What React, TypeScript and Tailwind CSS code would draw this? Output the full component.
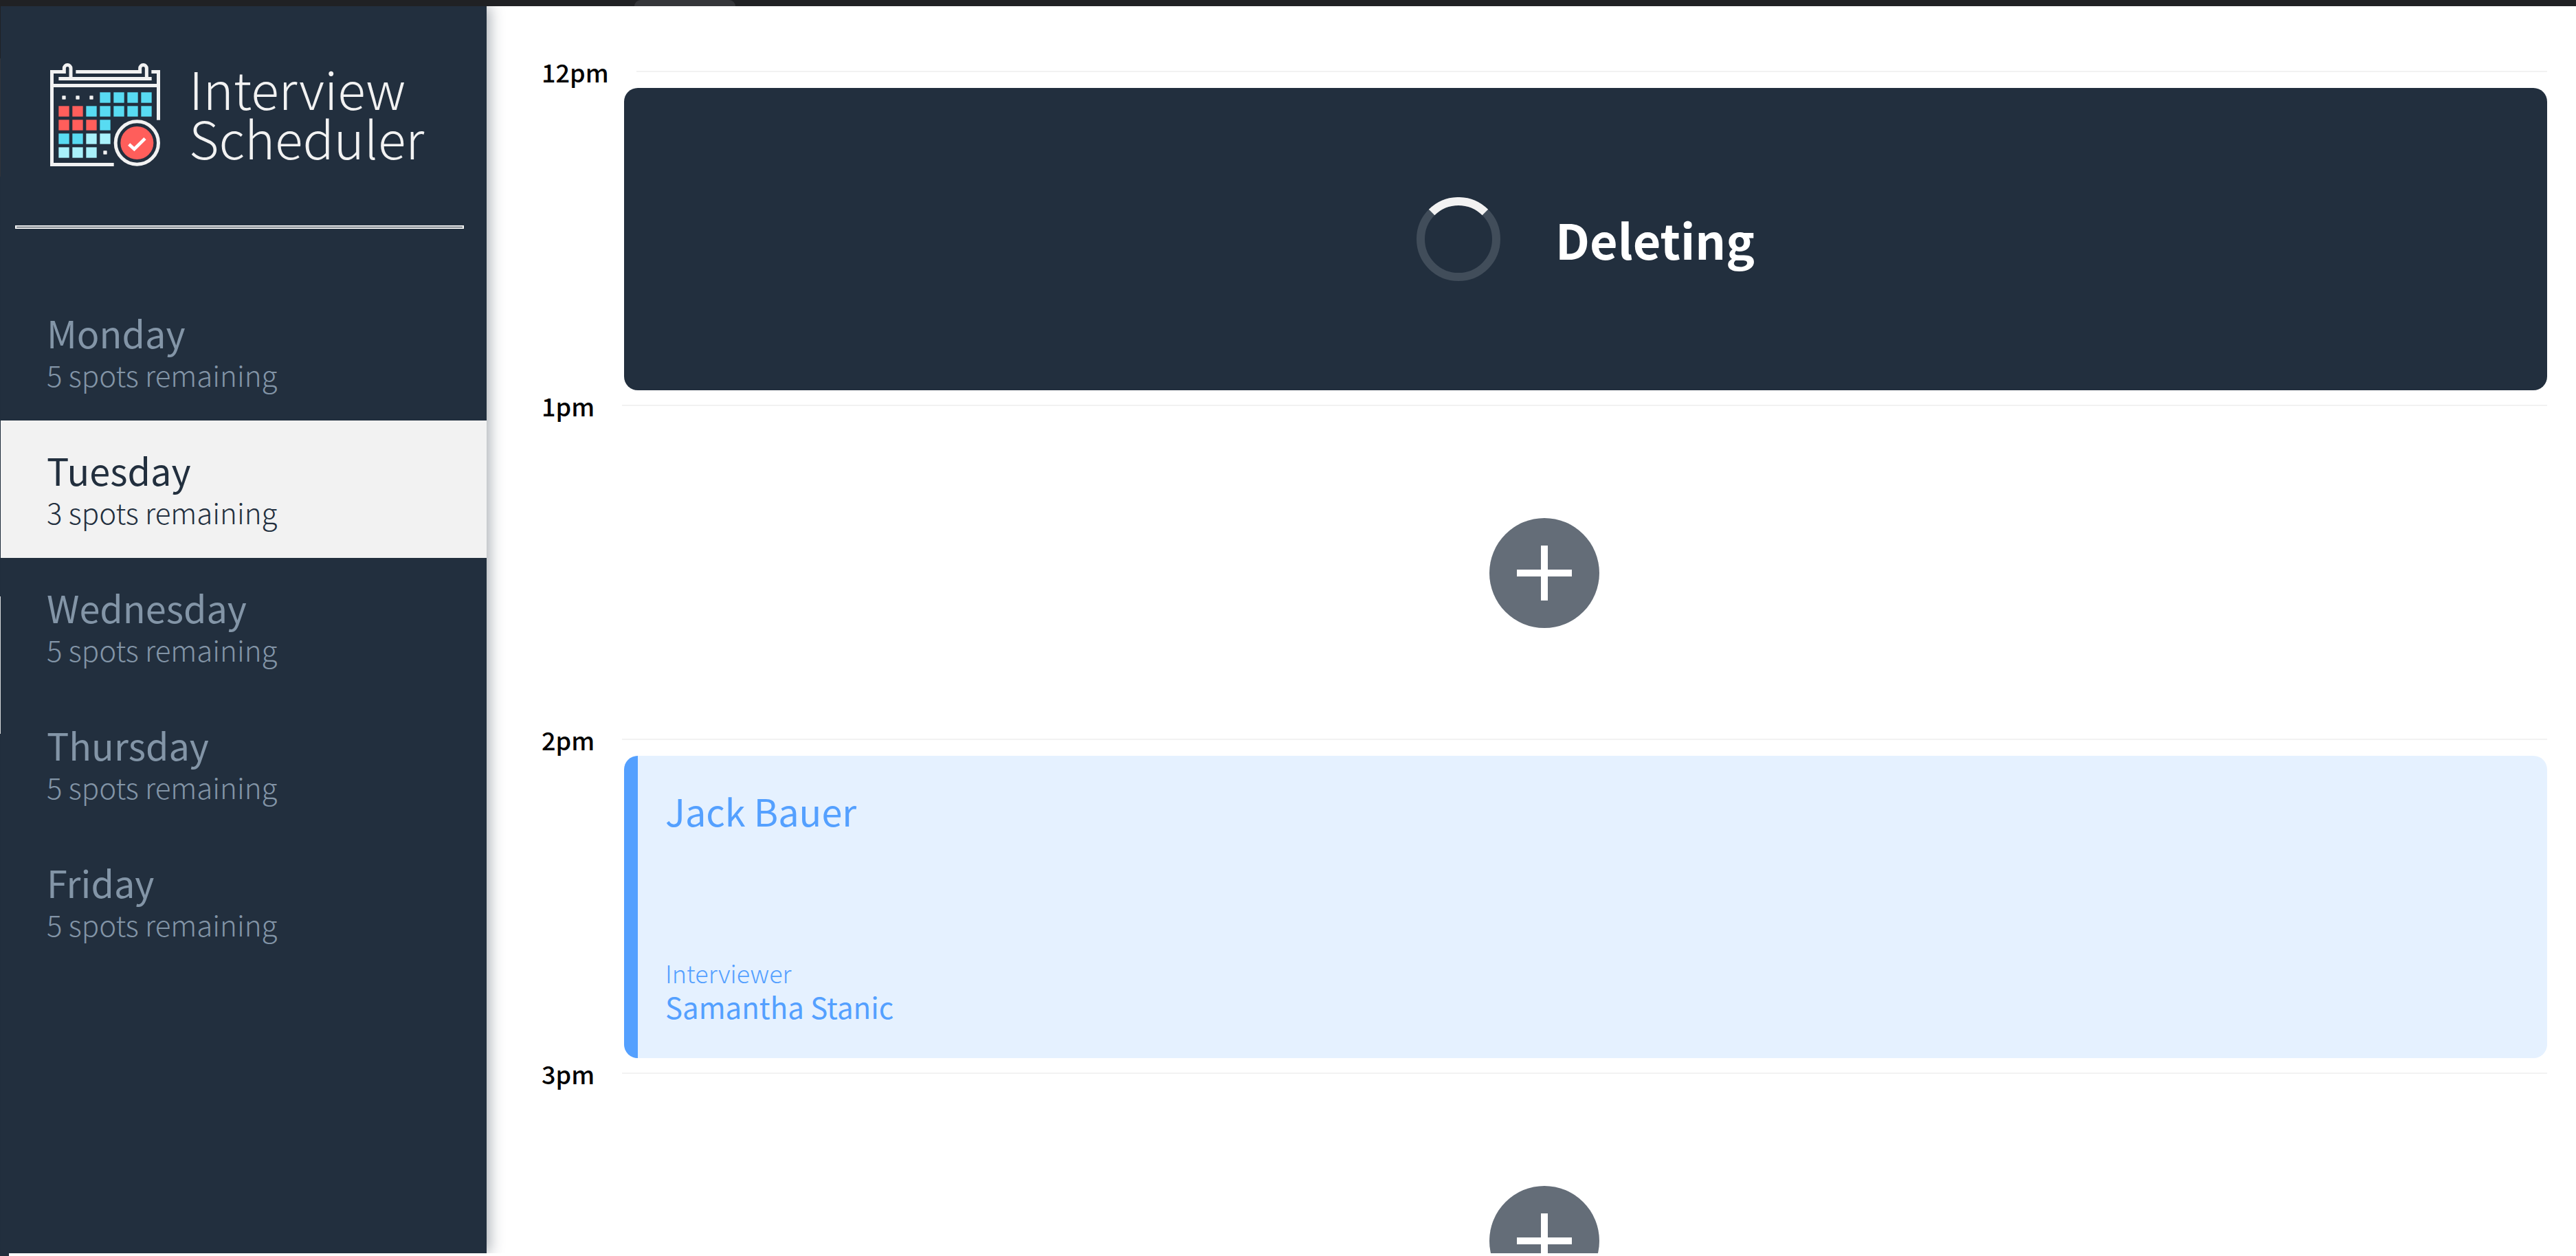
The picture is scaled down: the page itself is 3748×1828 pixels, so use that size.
const days = [
  { name: "Monday", spots: 5 },
  { name: "Tuesday", spots: 3, selected: true },
  { name: "Wednesday", spots: 5 },
  { name: "Thursday", spots: 5 },
  { name: "Friday", spots: 5 },
];

const BLUE = "#58dbf2";
const PALE = "#a9f1fa";
const RED = "#ff5e5b";

// Filled cells of the calendar: column, row, colour
const cells: [number, number, string][] = [
  [3, 0, BLUE], [4, 0, BLUE], [5, 0, BLUE], [6, 0, BLUE],
  [0, 1, RED], [1, 1, RED], [2, 1, BLUE], [3, 1, BLUE], [4, 1, BLUE], [5, 1, BLUE], [6, 1, BLUE],
  [0, 2, RED], [1, 2, RED], [2, 2, RED], [3, 2, BLUE],
  [0, 3, BLUE], [1, 3, BLUE], [2, 3, PALE], [3, 3, PALE],
  [0, 4, PALE], [1, 4, PALE], [2, 4, PALE],
];

const dots: [number, number][] = [[0, 0], [1, 0], [2, 0], [3, 4]];

function CalendarIcon() {
  return (
    <svg viewBox="99 66 480 450" className="h-[150px] w-[160px] shrink-0" aria-hidden="true">
      <g fill="none" stroke="#f2f2f2" strokeWidth="15">
        <path d="M189 134V88a14.500 14.500 0 0 0-29 0V103.500H106.500V508.500H377" />
        <path d="M520 134V88a14.500 14.500 0 0 0-29 0V103.500H211" />
        <path d="M541 103.500H571.500V314" />
        <path d="M136 133.500H542" />
        <path d="M106 163.500H571" />
        <circle cx="478" cy="414" r="93.500" />
      </g>
      {cells.map(([c, r, color]) => (
        <rect key={`${c}-${r}`} x={136 + c * 60} y={193 + r * 60} width="46" height="46" fill={color} />
      ))}
      {dots.map(([c, r]) => (
        <rect key={`${c}-${r}`} x={151 + c * 60} y={208 + r * 60} width="16" height="16" rx="2" fill="#f2f2f2" />
      ))}
      <circle cx="478" cy="414" r="72" fill="#ff5e5b" />
      <path d="M443 420L466 441L513 395" fill="none" stroke="#fff" strokeWidth="14" />
    </svg>
  );
}

function DayItem({ name, spots, selected }: { name: string; spots: number; selected?: boolean }) {
  return (
    <li>
      <button
        type="button"
        aria-pressed={!!selected}
        className={
          "block h-[200px] w-full px-[67px] pt-[42px] pb-9 text-left " +
          (selected ? "bg-[#f2f2f2] text-[#222f3e]" : "text-[#8395a7]")
        }
      >
        <span className="block text-[54px] leading-[60px]">{name}</span>
        <span className="block text-[42px] leading-[62px] font-light">{spots} spots remaining</span>
      </button>
    </li>
  );
}

function TimeHeader({ time }: { time: string }) {
  return (
    <header className="mb-px flex h-[46px] items-center gap-10">
      <h4 className="text-[36px] leading-[46px] font-medium text-black">{time}</h4>
      <div className="h-[2px] flex-1 bg-[#f2f2f2]" />
    </header>
  );
}

function AddButton() {
  return (
    <div className="flex h-[440px] items-center justify-center">
      <button type="button" aria-label="Add appointment" className="size-40">
        <svg viewBox="0 0 160 160" className="size-40" aria-hidden="true">
          <circle cx="80" cy="80" r="80" fill="#646d78" />
          <path d="M40 80H120M80 40V120" stroke="#fff" strokeWidth="10" />
        </svg>
      </button>
    </div>
  );
}

function Status({ message }: { message: string }) {
  return (
    <div className="ml-[120px] flex h-[440px] items-center justify-center gap-20 rounded-[20px] bg-[#222f3e]">
      <svg viewBox="0 0 122 122" className="size-[122px]" aria-hidden="true">
        <circle cx="61" cy="61" r="55" fill="none" stroke="#414d5a" strokeWidth="12" />
        <path d="M22.100 22.100A55 55 0 0 1 99.900 22.100" fill="none" stroke="#f2f2f2" strokeWidth="12" />
      </svg>
      <h1 className="text-[70px] leading-[96px] font-semibold text-white">{message}</h1>
    </div>
  );
}

function Booking({ student, interviewer }: { student: string; interviewer: string }) {
  return (
    <div className="ml-[120px] flex h-[440px] flex-col justify-between rounded-[20px] border-l-[20px] border-[#54a0ff] bg-[#e5f1ff] px-10 py-[50px] text-[#54a0ff]">
      <h2 className="text-[54px] leading-[60px]">{student}</h2>
      <section>
        <h4 className="text-[36px] leading-[50px] font-light">Interviewer</h4>
        <h3 className="text-[42px] leading-[50px]">{interviewer}</h3>
      </section>
    </div>
  );
}

export default function App() {
  return (
    <div className="flex h-screen flex-col overflow-hidden bg-white font-['Source_Sans_Pro','Noto_Sans_CJK_SC',sans-serif]">
      <div className="h-[9px] shrink-0 bg-[#202124] pl-[923px]">
        <div className="h-[9px] w-[147px] rounded-t-[14px] bg-[#35363a]" />
      </div>
      <main className="flex min-h-0 flex-1 overflow-hidden">
        <div className="flex w-px shrink-0 flex-col bg-[#222f3e]">
          <div className="h-[76px] bg-[#202124]" />
          <div className="h-[172px] bg-[#35363a]" />
          <div className="mt-[611px] h-[200px] bg-[#f2f2f2]" />
        </div>
        <aside className="w-[707px] shrink-0 bg-[#222f3e] shadow-[4px_0_20px_rgba(34,47,62,0.4)]">
          <div className="flex h-[319px] items-start gap-[42px] pt-[83px] pl-[72px]">
            <CalendarIcon />
            <div className="text-[75px] leading-[72px] font-light text-[#f2f2f2]">
              <div>Interview</div>
              <div>Scheduler</div>
            </div>
          </div>
          <hr className="mr-[33px] ml-[21px] h-[5px] border-2 border-[#f2f2f2]" />
          <nav className="pt-[79px]">
            <ul>
              {days.map((d) => (
                <DayItem key={d.name} {...d} />
              ))}
            </ul>
          </nav>
        </aside>
        <section className="flex min-w-0 flex-1 flex-col pt-[72px] pr-[42px] pl-20">
          <article className="h-[486px] shrink-0">
            <TimeHeader time="12pm" />
            <Status message="Deleting" />
          </article>
          <article className="h-[486px] shrink-0">
            <TimeHeader time="1pm" />
            <AddButton />
          </article>
          <article className="h-[486px] shrink-0">
            <TimeHeader time="2pm" />
            <Booking student="Jack Bauer" interviewer="Samantha Stanic" />
          </article>
          <article className="h-[486px] shrink-0">
            <TimeHeader time="3pm" />
            <AddButton />
          </article>
        </section>
      </main>
      <footer className="flex h-1 shrink-0 bg-white">
        <div className="w-[13px] bg-[#222f3e]" />
      </footer>
    </div>
  );
}
